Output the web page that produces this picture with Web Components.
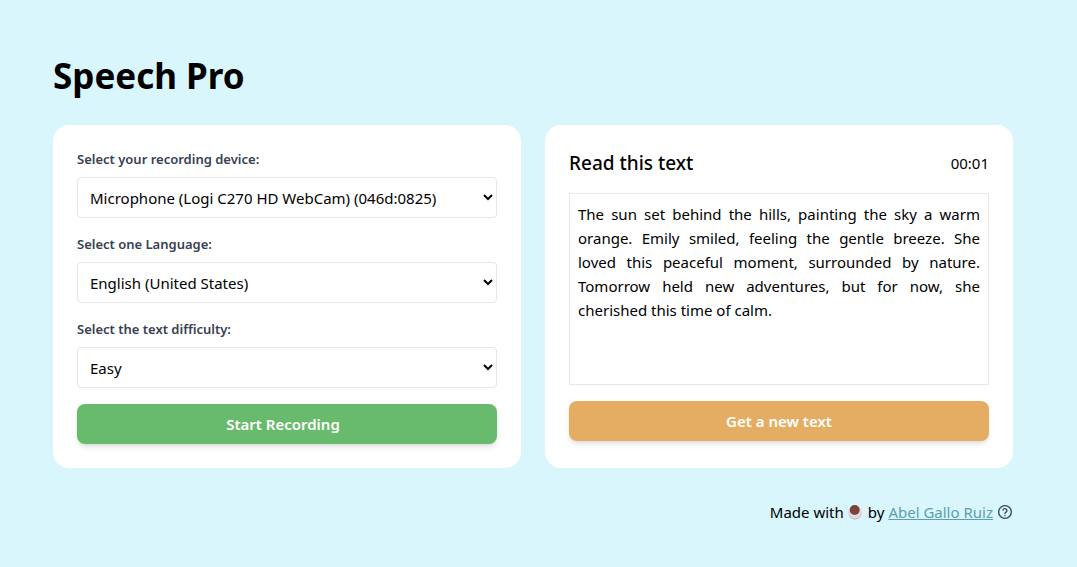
<!DOCTYPE html>
<html lang="en">
<head>
<meta charset="utf-8">
<meta name="viewport" content="width=device-width, initial-scale=1">
<title>Speech Pro</title>
<style>
  body {
    margin: 0;
    background: #d9f6fd;
    color: #000;
    font: 400 15px/24px "Noto Sans", "Open Sans", sans-serif;
  }
</style>
</head>
<body>
<speech-app>
  <panel-card>
    <select-field label="Select your recording device:">
      <option>Microphone (Logi C270 HD WebCam) (046d:0825)</option>
    </select-field>
    <select-field label="Select one Language:">
      <option>English (United States)</option>
      <option>Spanish (Spain)</option>
    </select-field>
    <select-field label="Select the text difficulty:">
      <option>Easy</option>
      <option>Medium</option>
      <option>Hard</option>
    </select-field>
    <action-button tone="go">Start Recording</action-button>
  </panel-card>
  <panel-card>
    <reading-text time="00:01">The sun set behind the hills, painting the sky a warm orange. Emily smiled, feeling the gentle breeze. She loved this peaceful moment, surrounded by nature. Tomorrow held new adventures, but for now, she cherished this time of calm.</reading-text>
    <action-button tone="new">Get a new text</action-button>
  </panel-card>
  <page-credits slot="footer"></page-credits>
</speech-app>

<script>
const define = (name, html, setup) => {
  const template = document.createElement('template');
  template.innerHTML = html;
  customElements.define(name, class extends HTMLElement {
    connectedCallback() {
      if (this.shadowRoot) return;
      this.attachShadow({ mode: 'open' }).append(template.content.cloneNode(true));
      if (setup) setup(this, this.shadowRoot);
    }
  });
};

define('speech-app', `
  <style>
    :host { display: block; padding: 51px 35px 40px 24px; }
    .page { max-width: 960px; margin: 0 auto; }
    h1 { margin: 0 0 24px; font-size: 35px; line-height: 50px; font-weight: 700; }
    main { display: grid; grid-template-columns: repeat(auto-fit, minmax(min(100%, 360px), 1fr)); gap: 24px; }
    footer { margin-top: 32px; }
  </style>
  <div class="page">
    <h1>Speech Pro</h1>
    <main><slot></slot></main>
    <footer><slot name="footer"></slot></footer>
  </div>`);

define('panel-card', `
  <style>
    :host { display: flex; flex-direction: column; gap: 16px; padding: 24px; background: #fff; border-radius: 16px; }
  </style>
  <slot></slot>`);

define('select-field', `
  <style>
    :host { display: flex; flex-direction: column; gap: 8px; }
    label { font-size: 13px; line-height: 20px; font-weight: 600; color: #374151; }
    select {
      width: 100%; height: 41px; box-sizing: border-box; margin: 0; padding: 8px;
      border: 1px solid #e5e7eb; border-radius: 4px;
      background: #fff; color: #000; font: inherit;
    }
  </style>
  <label for="choice"></label>
  <select id="choice"></select>`,
  (host, root) => {
    root.querySelector('label').textContent = host.getAttribute('label');
    root.querySelector('select').append(...host.querySelectorAll('option'));
  });

define('action-button', `
  <style>
    :host { display: block; }
    :host([tone="go"]) { --tone: #68bb6c; --icon-gap: 8px; }
    :host([tone="new"]) { --tone: #e5ad64; }
    button {
      display: flex; justify-content: center; gap: var(--icon-gap, 0);
      width: 100%; padding: 8px 16px; border: 0; border-radius: 8px;
      background: var(--tone); color: #fff; font: inherit; font-weight: 600; cursor: pointer;
      box-shadow: 0 4px 6px -1px rgb(0 0 0 / .1), 0 2px 4px -2px rgb(0 0 0 / .1);
    }
  </style>
  <button type="button"><slot></slot><span><slot name="icon"></slot></span></button>`);

define('reading-text', `
  <style>
    :host { display: block; }
    header { display: flex; justify-content: space-between; align-items: center; margin-bottom: 16px; }
    h2 { margin: 0; font-size: 19px; line-height: 28px; font-weight: 500; }
    p { min-height: 192px; box-sizing: border-box; margin: 0; padding: 8px; border: 1px solid #e5e7eb; text-align: justify; }
  </style>
  <header><h2>Read this text</h2><time></time></header>
  <p><slot></slot></p>`,
  (host, root) => { root.querySelector('time').textContent = host.getAttribute('time'); });

define('page-credits', `
  <style>
    :host { display: flex; justify-content: flex-end; align-items: center; gap: 4px; }
    a { color: #5c9fae; text-decoration: underline; }
    svg { display: block; }
    button { padding: 0; border: 0; background: none; color: #3b4a50; cursor: pointer; }
  </style>
  <span>Made with</span>
  <svg width="16" height="16" viewBox="0 0 16 16" role="img" aria-label="coffee">
    <path d="M.5 8C.5 12.500 3 15.500 7 15.500S13.800 12.500 13.800 8z" fill="#bfb9c2"/>
    <ellipse cx="7" cy="7.800" rx="6.600" ry="6.700" fill="#e3dadd"/>
    <ellipse cx="6.700" cy="6" rx="5" ry="5" fill="#7c4436"/>
  </svg>
  <span>by</span>
  <a href="#author">Abel Gallo Ruiz</a>
  <button type="button" aria-label="Help">
    <svg width="16" height="16" viewBox="0 0 24 24" fill="none" stroke="currentColor" stroke-width="2" stroke-linecap="round" stroke-linejoin="round">
      <circle cx="12" cy="12" r="9.5"/>
      <path d="M9 9.2a3 3 0 0 1 5.900.8c0 2-2.900 2.400-2.900 4.200M12 17.200v.1"/>
    </svg>
  </button>`);
</script>
</body>
</html>
